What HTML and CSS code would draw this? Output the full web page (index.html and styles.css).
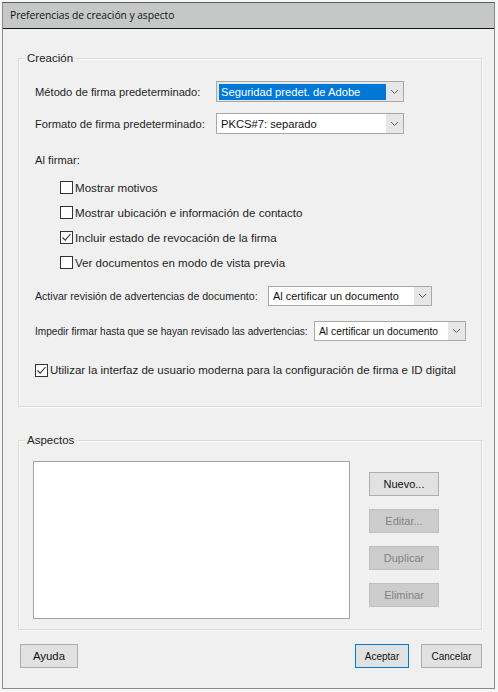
FILE: index.html
```html
<!DOCTYPE html>
<html lang="es">
<head>
<meta charset="utf-8">
<title>Preferencias de creación y aspecto</title>
<link rel="stylesheet" href="styles.css">
</head>
<body>
<div class="window">
  <div class="titlebar">Preferencias de creación y aspecto</div>
  <div class="content">
    <div class="group creacion">
      <span class="group-title">Creación</span>
      <div class="row r1">
        <span class="lbl lbl-main">Método de firma predeterminado:</span>
        <div class="select sel-main sel-focus">
          <span class="sel-text"><span class="hl">Seguridad predet. de Adobe</span></span>
          <span class="sel-arrow"><svg width="9" height="6" viewBox="0 0 9 6"><polyline points="1,1 4.5,4.5 8,1" fill="none" stroke="#606060" stroke-width="1"/></svg></span>
        </div>
      </div>
      <div class="row r2">
        <span class="lbl lbl-main">Formato de firma predeterminado:</span>
        <div class="select sel-main">
          <span class="sel-text">PKCS#7: separado</span>
          <span class="sel-arrow"><svg width="9" height="6" viewBox="0 0 9 6"><polyline points="1,1 4.5,4.5 8,1" fill="none" stroke="#606060" stroke-width="1"/></svg></span>
        </div>
      </div>
      <div class="row r3"><span class="lbl lbl-main">Al firmar:</span></div>
      <div class="checks">
        <label class="check"><span class="box"></span><span class="ctext">Mostrar motivos</span></label>
        <label class="check"><span class="box"></span><span class="ctext">Mostrar ubicación e información de contacto</span></label>
        <label class="check"><span class="box"><svg width="11" height="11" viewBox="0 0 11 11"><polyline points="1.5,5.5 4.2,8.2 9.5,2" fill="none" stroke="#333" stroke-width="1.1"/></svg></span><span class="ctext">Incluir estado de revocación de la firma</span></label>
        <label class="check"><span class="box"></span><span class="ctext">Ver documentos en modo de vista previa</span></label>
      </div>
      <div class="row r4">
        <span class="lbl lbl-activar">Activar revisión de advertencias de documento:</span>
        <div class="select sel-activar">
          <span class="sel-text">Al certificar un documento</span>
          <span class="sel-arrow"><svg width="9" height="6" viewBox="0 0 9 6"><polyline points="1,1 4.5,4.5 8,1" fill="none" stroke="#606060" stroke-width="1"/></svg></span>
        </div>
      </div>
      <div class="row r5">
        <span class="lbl lbl-impedir">Impedir firmar hasta que se hayan revisado las advertencias:</span>
        <div class="select sel-impedir">
          <span class="sel-text">Al certificar un documento</span>
          <span class="sel-arrow"><svg width="9" height="6" viewBox="0 0 9 6"><polyline points="1,1 4.5,4.5 8,1" fill="none" stroke="#606060" stroke-width="1"/></svg></span>
        </div>
      </div>
      <label class="check modern"><span class="box"><svg width="11" height="11" viewBox="0 0 11 11"><polyline points="1.5,5.5 4.2,8.2 9.5,2" fill="none" stroke="#333" stroke-width="1.1"/></svg></span><span class="ctext ctext-modern">Utilizar la interfaz de usuario moderna para la configuración de firma e ID digital</span></label>
    </div>

    <div class="group aspectos">
      <span class="group-title">Aspectos</span>
      <div class="asp-body">
        <div class="listbox"></div>
        <div class="asp-buttons">
          <button class="btn btn-side">Nuevo...</button>
          <button class="btn btn-side btn-disabled">Editar...</button>
          <button class="btn btn-side btn-disabled">Duplicar</button>
          <button class="btn btn-side btn-disabled">Eliminar</button>
        </div>
      </div>
    </div>

    <div class="footer">
      <button class="btn btn-ayuda">Ayuda</button>
      <div class="footer-right">
        <button class="btn btn-aceptar">Aceptar</button>
        <button class="btn btn-cancelar">Cancelar</button>
      </div>
    </div>
  </div>
</div>
</body>
</html>
```

FILE: styles.css
```css
html, body {
  margin: 0;
  padding: 0;
}
body {
  background: #f6f6f6;
  width: 498px;
  height: 692px;
  overflow: hidden;
  font-family: "Liberation Sans", Arial, sans-serif;
  color: #1e1e1e;
}
.window {
  margin: 2px 0 0 2px;
  width: 491px;
  height: 685px;
  border: 1px solid #8a8a8a;
  border-top-color: #5a5a5a;
  background: #f0f0f0;
  display: flex;
  flex-direction: column;
}
.titlebar {
  height: 25px;
  background: #c6c8c7;
  border-bottom: 1px solid #141414;
  font-family: "Open Sans", "Noto Sans", sans-serif;
  font-size: 10.3px;
  line-height: 25px;
  padding-left: 7px;
  color: #111;
  letter-spacing: -0.05px;
}
.content {
  flex: 1;
  display: flex;
  flex-direction: column;
  padding: 29px 12px 0 15px;
}
.group {
  position: relative;
  border: 1px solid #dadada;
  box-shadow: 1px 1px 0 #fafafa, inset 1px 1px 0 #fafafa;
}
.group-title {
  position: absolute;
  top: -8px;
  left: 6px;
  padding: 0 2px;
  background: #f0f0f0;
  font-size: 11.5px;
  line-height: 15px;
  color: #222;
}
.creacion {
  padding: 0 0 28px 16px;
}
.row {
  display: flex;
  align-items: center;
}
.lbl {
  white-space: nowrap;
}
.lbl-main {
  font-size: 11.2px;
  width: 181px;
}
.r1 { margin-top: 22px; height: 21px; }
.r2 { margin-top: 11px; height: 21px; }
.r3 { margin-top: 18px; height: 16px; }
.r4 { margin-top: 11px; height: 20px; }
.r5 { margin-top: 15px; height: 20px; }

.select {
  box-sizing: border-box;
  display: flex;
  align-items: stretch;
  border: 1px solid #a8a8a8;
  background: #fff;
  height: 100%;
}
.sel-text {
  flex: 1;
  display: flex;
  align-items: center;
  padding-left: 4px;
  white-space: nowrap;
  color: #111;
}
.sel-arrow {
  width: 17px;
  background: #e6e6e6;
  display: flex;
  align-items: center;
  justify-content: center;
}
.sel-main {
  width: 188px;
  font-size: 11.2px;
}
.sel-focus {
  background: #e5e5e5;
}
.sel-focus .sel-text {
  padding: 2px 0 1px 2px;
}
.hl {
  display: flex;
  align-items: center;
  background: #0078d7;
  color: #fff;
  height: 100%;
  width: 100%;
  padding-left: 2px;
}
.checks {
  margin-top: 7px;
  padding-left: 25px;
  display: flex;
  flex-direction: column;
}
.check {
  display: flex;
  align-items: center;
  height: 25px;
}
.box {
  box-sizing: border-box;
  width: 13px;
  height: 13px;
  border: 1px solid #333;
  background: #fff;
  display: flex;
  align-items: center;
  justify-content: center;
  margin-right: 2px;
}
.ctext {
  font-size: 11.6px;
  white-space: nowrap;
}
.lbl-activar {
  font-size: 10.6px;
  width: 233px;
}
.sel-activar {
  width: 164px;
  font-size: 10.9px;
}
.lbl-impedir {
  font-size: 10.1px;
  width: 279px;
}
.sel-impedir {
  width: 152px;
  font-size: 10.3px;
}
.modern {
  margin-top: 21px;
  height: 16px;
}
.ctext-modern {
  font-size: 11.5px;
}
.aspectos {
  margin-top: 33px;
  padding: 20px 0 10px 14px;
}
.asp-body {
  display: flex;
}
.listbox {
  box-sizing: border-box;
  width: 317px;
  height: 158px;
  background: #fff;
  border: 1px solid #a3a3a3;
}
.asp-buttons {
  margin-left: 19px;
  padding-top: 11px;
  display: flex;
  flex-direction: column;
  gap: 13px;
}
.btn {
  box-sizing: border-box;
  font-family: "Liberation Sans", Arial, sans-serif;
  background: #e1e1e1;
  border: 1px solid #adadad;
  color: #111;
  padding: 0;
  margin: 0;
  height: 24px;
}
.btn-side {
  width: 70px;
  font-size: 11px;
}
.btn-disabled {
  background: #cccccc;
  border-color: #bfbfbf;
  color: #838383;
}
.footer {
  margin-top: 14px;
  display: flex;
  justify-content: space-between;
  padding-left: 2px;
}
.footer-right {
  display: flex;
  gap: 12px;
}
.btn-ayuda {
  width: 58px;
  font-size: 11.4px;
}
.btn-aceptar {
  width: 54px;
  font-size: 10px;
  border-color: #0078d7;
}
.btn-cancelar {
  width: 61px;
  font-size: 10px;
}
```
